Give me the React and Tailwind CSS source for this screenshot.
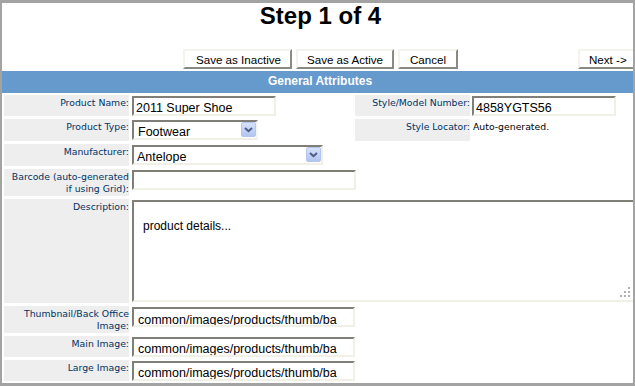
import React from 'react';

const labelCls = "w-[125px] shrink-0 bg-[#eeeeee] pt-[2px] text-right text-[9.3px] leading-[12px] text-[#003366] font-['DejaVu_Sans',Verdana,sans-serif]";
const fieldCls = "h-[20px] border-2 border-t-[#7f7f77] border-l-[#7f7f77] border-r-[#f1f0e6] border-b-[#f1f0e6] bg-white overflow-hidden whitespace-nowrap text-[12.5px] leading-[14px] text-black font-['Liberation_Sans',Arial,sans-serif]";
const btnCls = "h-[20px] shrink-0 border-2 border-t-[#f4f3ec] border-l-[#f4f3ec] border-r-[#8a8a82] border-b-[#8a8a82] bg-white pt-[2px] text-center text-[11.6px] leading-[14px] text-black font-['Liberation_Sans',Arial,sans-serif]";

function Label({ children }) {
  return <div className={labelCls}>{children}</div>;
}

function SelectArrow() {
  return (
    <span className="flex h-[15px] w-[15px] shrink-0 items-center justify-center rounded-[2px] border border-[#b3c4ee] bg-linear-to-b from-[#d6e1fb] to-[#b2c5f1]">
      <svg width="13" height="13" viewBox="0 0 13 13">
        <path d="M3 5l3.5 3.2L10 5" fill="none" stroke="#4b5d85" strokeWidth="2" />
      </svg>
    </span>
  );
}

export default function App() {
  return (
    <div className="h-[386px] w-[635px] overflow-hidden border-t-[3px] border-b-[3px] border-l-[2px] border-r-[2px] border-[#a3a3a3] bg-white">
      {/* title */}
      <h1 className="pl-[6px] text-center text-[24px] font-bold leading-[26px] text-black font-['Liberation_Sans',Arial,sans-serif]">
        Step 1 of 4
      </h1>

      {/* action buttons */}
      <div className="mt-[20px] flex overflow-hidden">
        <div className="ml-[181px] flex gap-[4px]">
          <button className={btnCls + " w-[109px] pl-[2px]"}>Save as Inactive</button>
          <button className={btnCls + " w-[98px]"}>Save as Active</button>
          <button className={btnCls + " w-[60px]"}>Cancel</button>
        </div>
        <button className={btnCls + " ml-[120px] w-[62px] pl-[9px] text-left"}>Next -&gt;</button>
      </div>

      {/* section header */}
      <div className="mt-[2px] h-[22px] bg-[#6699cc] pl-[5px] pt-[1px] text-center text-[12px] font-bold leading-[19px] text-white font-['Liberation_Sans',Arial,sans-serif]">
        General Attributes
      </div>

      <div className="mt-[2px] flex flex-col gap-[3px] pl-[2px]">
        {/* product name / style number */}
        <div className="flex h-[21px]">
          <Label>Product Name:</Label>
          <div className="ml-[3px] w-[220px] shrink-0 pt-[1px]">
            <div className={fieldCls + " w-[144px] pl-[2px] pt-[3px]"}>2011 Super Shoe</div>
          </div>
          <div className="ml-[3px] w-[115px] shrink-0 bg-[#eeeeee] pt-[2px] text-right text-[9.3px] leading-[12px] text-[#003366] font-['DejaVu_Sans',Verdana,sans-serif]">
            Style/Model Number:
          </div>
          <div className="ml-[2px] pt-[1px]">
            <div className={fieldCls + " w-[144px] pl-[2px] pt-[3px]"}>4858YGTS56</div>
          </div>
        </div>

        {/* product type / style locator */}
        <div className="flex h-[22px]">
          <Label>Product Type:</Label>
          <div className="ml-[3px] w-[220px] shrink-0 pt-[1px]">
            <div className={fieldCls + " flex w-[126px] items-start border-r-[#f7f6ee]"}>
              <span className="flex-1 pl-[4px] pt-[3px]">Footwear</span>
              <SelectArrow />
            </div>
          </div>
          <div className="ml-[3px] w-[115px] shrink-0 bg-[#eeeeee] pt-[2px] text-right text-[9.3px] leading-[12px] text-[#003366] font-['DejaVu_Sans',Verdana,sans-serif]">
            Style Locator:
          </div>
          <div className="ml-[3px] pt-[2px] text-[9.3px] leading-[12px] text-black font-['DejaVu_Sans',Verdana,sans-serif]">
            Auto-generated.
          </div>
        </div>

        {/* manufacturer */}
        <div className="flex h-[22px]">
          <Label>Manufacturer:</Label>
          <div className="ml-[3px] pt-[1px]">
            <div className={fieldCls + " flex w-[191px] items-start"}>
              <span className="flex-1 pl-[3px] pt-[3px]">Antelope</span>
              <SelectArrow />
            </div>
          </div>
        </div>

        {/* barcode */}
        <div className="flex h-[27px]">
          <Label>
            Barcode (auto-generated
            <br />
            if using Grid):
          </Label>
          <div className="ml-[3px] pt-[1px]">
            <div className={fieldCls + " w-[224px]"}></div>
          </div>
        </div>

        {/* description */}
        <div className="flex h-[104px]">
          <Label>Description:</Label>
          <div className="ml-[3px] flex-1 pt-[1px]">
            <div className="relative h-[102px] border-2 border-r-0 border-t-[#7f7f77] border-l-[#7f7f77] border-b-[#f1f0e6] bg-white pl-[9px] pt-[17px] text-[12px] leading-[14px] text-black font-['Liberation_Sans',Arial,sans-serif]">
              product details...
              <svg className="absolute bottom-[3px] right-[3px]" width="10" height="10" viewBox="0 0 10 10">
                <rect x="8" y="0" width="2" height="2" fill="#b0b0b0" />
                <rect x="4" y="4" width="2" height="2" fill="#b0b0b0" />
                <rect x="8" y="4" width="2" height="2" fill="#b0b0b0" />
                <rect x="0" y="8" width="2" height="2" fill="#b0b0b0" />
                <rect x="4" y="8" width="2" height="2" fill="#b0b0b0" />
                <rect x="8" y="8" width="2" height="2" fill="#b0b0b0" />
              </svg>
            </div>
          </div>
        </div>

        {/* images */}
        <div className="flex h-[27px]">
          <Label>
            Thumbnail/Back Office
            <br />
            Image:
          </Label>
          <div className="ml-[3px] pt-[1px]">
            <div className={fieldCls + " w-[223px] pl-[4px] pt-[4px]"}>common/images/products/thumb/ba</div>
          </div>
        </div>

        <div className="flex h-[21px]">
          <Label>Main Image:</Label>
          <div className="ml-[3px] pt-[1px]">
            <div className={fieldCls + " w-[223px] pl-[4px] pt-[3px]"}>common/images/products/thumb/ba</div>
          </div>
        </div>

        <div className="flex h-[21px]">
          <Label>Large Image:</Label>
          <div className="ml-[3px] pt-[1px]">
            <div className={fieldCls + " w-[223px] pl-[4px] pt-[3px]"}>common/images/products/thumb/ba</div>
          </div>
        </div>
      </div>
    </div>
  );
}
